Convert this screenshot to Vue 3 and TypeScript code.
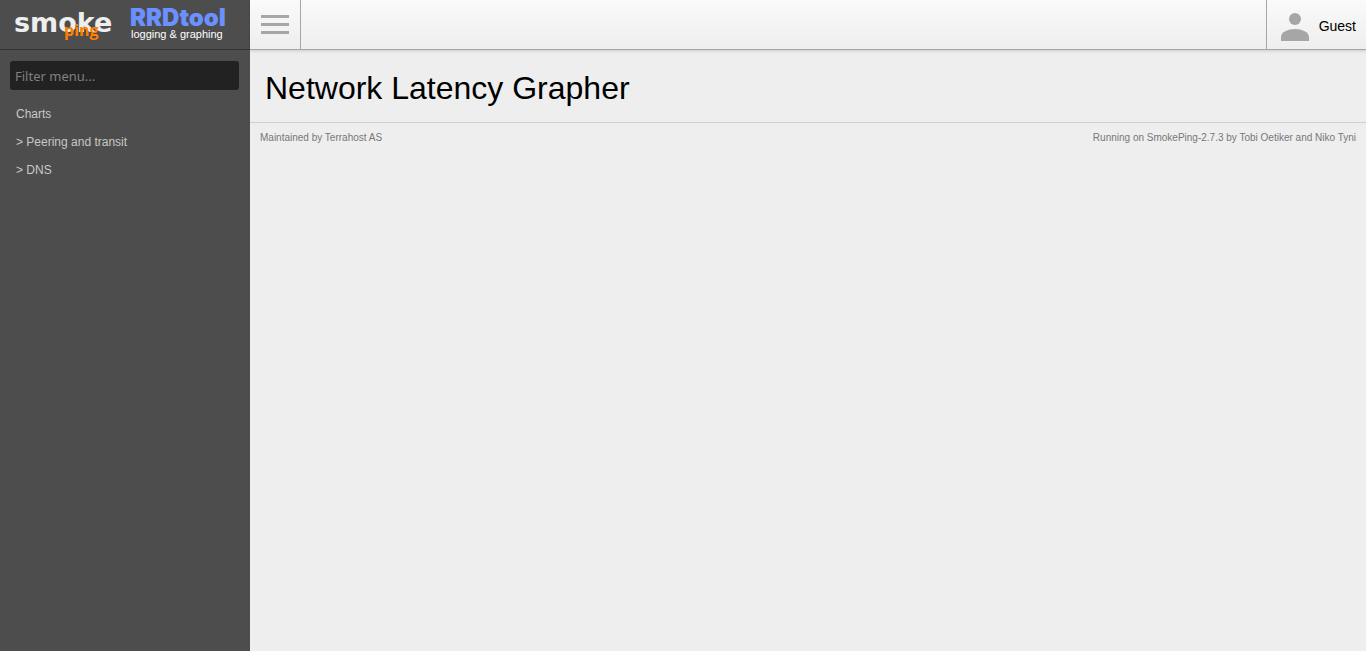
<script setup lang="ts">
import { computed, ref } from 'vue'

interface MenuEntry {
  label: string
  nested: boolean
}

const filter = ref('')
const menuOpen = ref(true)
const entries: MenuEntry[] = [
  { label: 'Charts', nested: false },
  { label: 'Peering and transit', nested: true },
  { label: 'DNS', nested: true },
]

const visibleEntries = computed(() =>
  entries.filter((entry) => entry.label.toLowerCase().includes(filter.value.toLowerCase())),
)
</script>

<template>
  <div class="page">
    <aside v-show="menuOpen" class="sidebar">
      <div class="logos">
        <a href="#smokeping" class="logo" aria-label="SmokePing">
          <svg width="104" height="32" viewBox="0 0 104 32">
            <text class="smoke" x="1" y="24">smoke</text>
            <text class="ping" x="51" y="28">ping</text>
          </svg>
        </a>
        <a href="#rrdtool" class="logo" aria-label="RRDtool">
          <svg width="98" height="36" viewBox="0 0 98 36">
            <text class="rrd" x="0" y="18">RRDtool</text>
            <text class="tagline" x="1" y="30">logging &amp; graphing</text>
          </svg>
        </a>
      </div>
      <input v-model="filter" class="filter" type="text" placeholder="Filter menu..." aria-label="Filter menu" />
      <ul class="menu">
        <li v-for="entry in visibleEntries" :key="entry.label">
          <a :href="'#' + entry.label"><template v-if="entry.nested">&gt;&nbsp;</template>{{ entry.label }}</a>
        </li>
      </ul>
    </aside>
    <div class="content">
      <header class="navbar">
        <button class="toggle" type="button" aria-label="Toggle menu" @click="menuOpen = !menuOpen">
          <svg width="28" height="20" viewBox="0 0 28 20" fill="#a6a6a6">
            <rect width="28" height="3" y="0" />
            <rect width="28" height="3" y="8" />
            <rect width="28" height="3" y="16" />
          </svg>
        </button>
        <div class="user">
          <svg width="28" height="28" viewBox="0 0 28 28" fill="#a6a6a6">
            <circle cx="14" cy="6" r="6" />
            <path d="M0 28V24C0 19 7 16 14 16S28 19 28 24V28Z" />
          </svg>
          <span>Guest</span>
        </div>
      </header>
      <main>
        <h1>Network Latency Grapher</h1>
      </main>
      <footer class="footer">
        <span>Maintained by <a href="#contact">Terrahost AS</a></span>
        <span>Running on <a href="#smokeping">SmokePing-2.7.3</a> by <a href="#tobi">Tobi Oetiker</a> and Niko Tyni</span>
      </footer>
    </div>
  </div>
</template>

<style>
body {
  margin: 0;
  background: #eee;
}
</style>

<style scoped>
.page {
  display: flex;
  min-height: 100vh;
  font-family: "Liberation Sans", Arial, sans-serif;
  background: #eee;
  color: #000;
}
.sidebar {
  flex: 0 0 250px;
  background: #4d4d4d;
}
.logos {
  display: flex;
  align-items: flex-start;
  gap: 13px;
  box-sizing: border-box;
  height: 50px;
  padding: 8px 0 0 13px;
  border-bottom: 1px solid #333;
}
.logo {
  display: block;
}
.logo svg {
  display: block;
  overflow: visible;
}
.smoke {
  font: bold 27px "DejaVu Sans", sans-serif;
  fill: #eee;
}
.ping {
  font: bold 16px "Open Sans", sans-serif;
  fill: #ff8000;
}
.rrd {
  font: 900 24px Inter, sans-serif;
  fill: #6b90ff;
}
.tagline {
  font: 11px "Liberation Sans", sans-serif;
  fill: #fff;
}
.filter {
  display: block;
  box-sizing: border-box;
  width: calc(100% - 21px);
  height: 29px;
  margin: 11px 11px 0 10px;
  padding: 0 5px;
  border: 0;
  border-radius: 3px;
  outline: 0;
  background: #222;
  color: #ccc;
  font: 13px "Noto Sans", sans-serif;
}
.filter::placeholder {
  color: #808080;
  opacity: 1;
}
.menu {
  margin: 10px 0 0;
  padding: 0 16px;
  list-style: none;
  font-size: 12px;
  line-height: 28px;
}
.menu a {
  display: block;
  color: #c8c8c8;
  text-decoration: none;
}
.content {
  flex: 1;
  min-width: 0;
}
.navbar {
  display: flex;
  justify-content: space-between;
  box-sizing: border-box;
  height: 50px;
  border-bottom: 1px solid #a6a6a6;
  background: linear-gradient(#fafafa, #eee);
  box-shadow: 0 1px 3px rgba(0, 0, 0, 0.15);
}
.toggle {
  display: flex;
  align-items: center;
  justify-content: center;
  box-sizing: border-box;
  width: 51px;
  padding: 0;
  border: 0;
  border-right: 1px solid #a6a6a6;
  background: none;
  cursor: pointer;
}
.user {
  display: flex;
  align-items: center;
  gap: 10px;
  padding: 4px 10px 0 14px;
  border-left: 1px solid #a6a6a6;
  font-size: 14px;
}
.user span {
  line-height: 16px;
  padding-bottom: 2px;
}
h1 {
  margin: 0;
  padding: 19px 15px 15px;
  font-size: 32px;
  font-weight: normal;
  line-height: 38px;
}
.footer {
  display: flex;
  justify-content: space-between;
  padding: 8px 10px;
  border-top: 1px solid #d0d0d0;
  color: #777;
  font-size: 10px;
  line-height: 14px;
}
.footer a {
  color: inherit;
  text-decoration: none;
}
</style>
